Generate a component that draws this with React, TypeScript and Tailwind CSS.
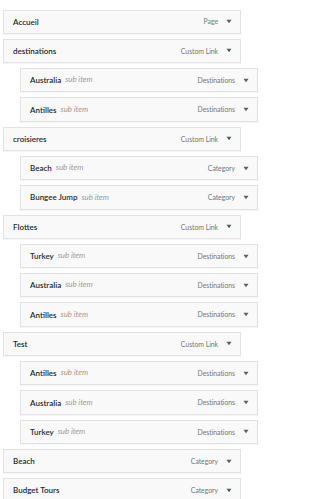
type Item = { title: string; type: string; sub?: boolean }

const items: Item[] = [
  { title: "Accueil", type: "Page" },
  { title: "destinations", type: "Custom Link" },
  { title: "Australia", type: "Destinations", sub: true },
  { title: "Antilles", type: "Destinations", sub: true },
  { title: "croisieres", type: "Custom Link" },
  { title: "Beach", type: "Category", sub: true },
  { title: "Bungee Jump", type: "Category", sub: true },
  { title: "Flottes", type: "Custom Link" },
  { title: "Turkey", type: "Destinations", sub: true },
  { title: "Australia", type: "Destinations", sub: true },
  { title: "Antilles", type: "Destinations", sub: true },
  { title: "Test", type: "Custom Link" },
  { title: "Antilles", type: "Destinations", sub: true },
  { title: "Australia", type: "Destinations", sub: true },
  { title: "Turkey", type: "Destinations", sub: true },
  { title: "Beach", type: "Category" },
  { title: "Budget Tours", type: "Category" },
]

function MenuItem({ item }: { item: Item }) {
  return (
    <div
      className={`flex items-center h-[24.3px] w-[238px] shrink-0 bg-[#f9f9f9] border border-[#e2e2e2] shadow-[0_1px_1px_rgba(0,0,0,0.04)] pl-[9px] pr-[8px] ${
        item.sub ? "ml-[20px]" : "ml-[3px]"
      }`}
    >
      <span className="text-[8px] font-semibold text-[#23282d]">{item.title}</span>
      {item.sub && <span className="ml-[4px] text-[7.8px] italic text-[#999]">sub item</span>}
      <span className="ml-auto text-[6.9px] tracking-[-0.05px] text-[#72777c]">{item.type}</span>
      {/* toggle arrow */}
      <svg width="6" height="5" viewBox="0 0 6 5" className="ml-[8px]">
        <path d="M0.5 0.8 L5.5 0.8 L3 4.2 Z" fill="#555d66" />
      </svg>
    </div>
  )
}

export default function App() {
  return (
    <div className="w-[328px] h-[499px] overflow-hidden bg-white pt-[9.5px] flex flex-col gap-[5px] font-['Lato',sans-serif]">
      {items.map((item, i) => (
        <MenuItem key={i} item={item} />
      ))}
    </div>
  )
}
